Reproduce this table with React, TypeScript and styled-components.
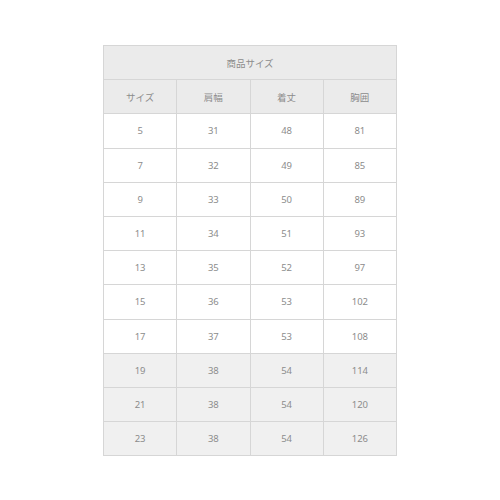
import React from "react";
import styled, { createGlobalStyle } from "styled-components";

const Global = createGlobalStyle`
  html, body { margin: 0; padding: 0; background: #ffffff; }
  body { font-family: "Noto Sans", "Noto Sans CJK JP", sans-serif; }
`;

const Page = styled.div`
  width: 500px;
  height: 500px;
  display: flex;
  justify-content: center;
  padding-top: 45px;
  box-sizing: border-box;
`;

const Table = styled.table`
  border-collapse: collapse;
  width: 294px;
  table-layout: fixed;
  font-size: 9.5px;
  color: #8c8c8c;
  align-self: flex-start;
`;

const Cell = styled.td<{ $shade?: "head" | "gray" | "white" }>`
  border: 1px solid #d6d6d6;
  height: 33.2px;
  padding: 0;
  text-align: center;
  vertical-align: middle;
  font-weight: 400;
  background: ${(p) =>
    p.$shade === "head" ? "#ebebeb" : p.$shade === "gray" ? "#f0f0f0" : "#ffffff"};
  font-family: "Noto Sans", "Noto Sans CJK JP", sans-serif;
`;

const rows: [string, string, string, string][] = [
  ["5", "31", "48", "81"],
  ["7", "32", "49", "85"],
  ["9", "33", "50", "89"],
  ["11", "34", "51", "93"],
  ["13", "35", "52", "97"],
  ["15", "36", "53", "102"],
  ["17", "37", "53", "108"],
  ["19", "38", "54", "114"],
  ["21", "38", "54", "120"],
  ["23", "38", "54", "126"],
];

export default function App() {
  return (
    <>
      <Global />
      <Page>
        <Table>
          <tbody>
            <tr>
              <Cell as="th" colSpan={4} $shade="head">
                商品サイズ
              </Cell>
            </tr>
            <tr>
              {["サイズ", "肩幅", "着丈", "胸囲"].map((h) => (
                <Cell key={h} as="th" $shade="head">
                  {h}
                </Cell>
              ))}
            </tr>
            {rows.map((r, i) => (
              <tr key={i}>
                {r.map((v, j) => (
                  <Cell key={j} $shade={i >= 7 ? "gray" : "white"}>
                    {v}
                  </Cell>
                ))}
              </tr>
            ))}
          </tbody>
        </Table>
      </Page>
    </>
  );
}
